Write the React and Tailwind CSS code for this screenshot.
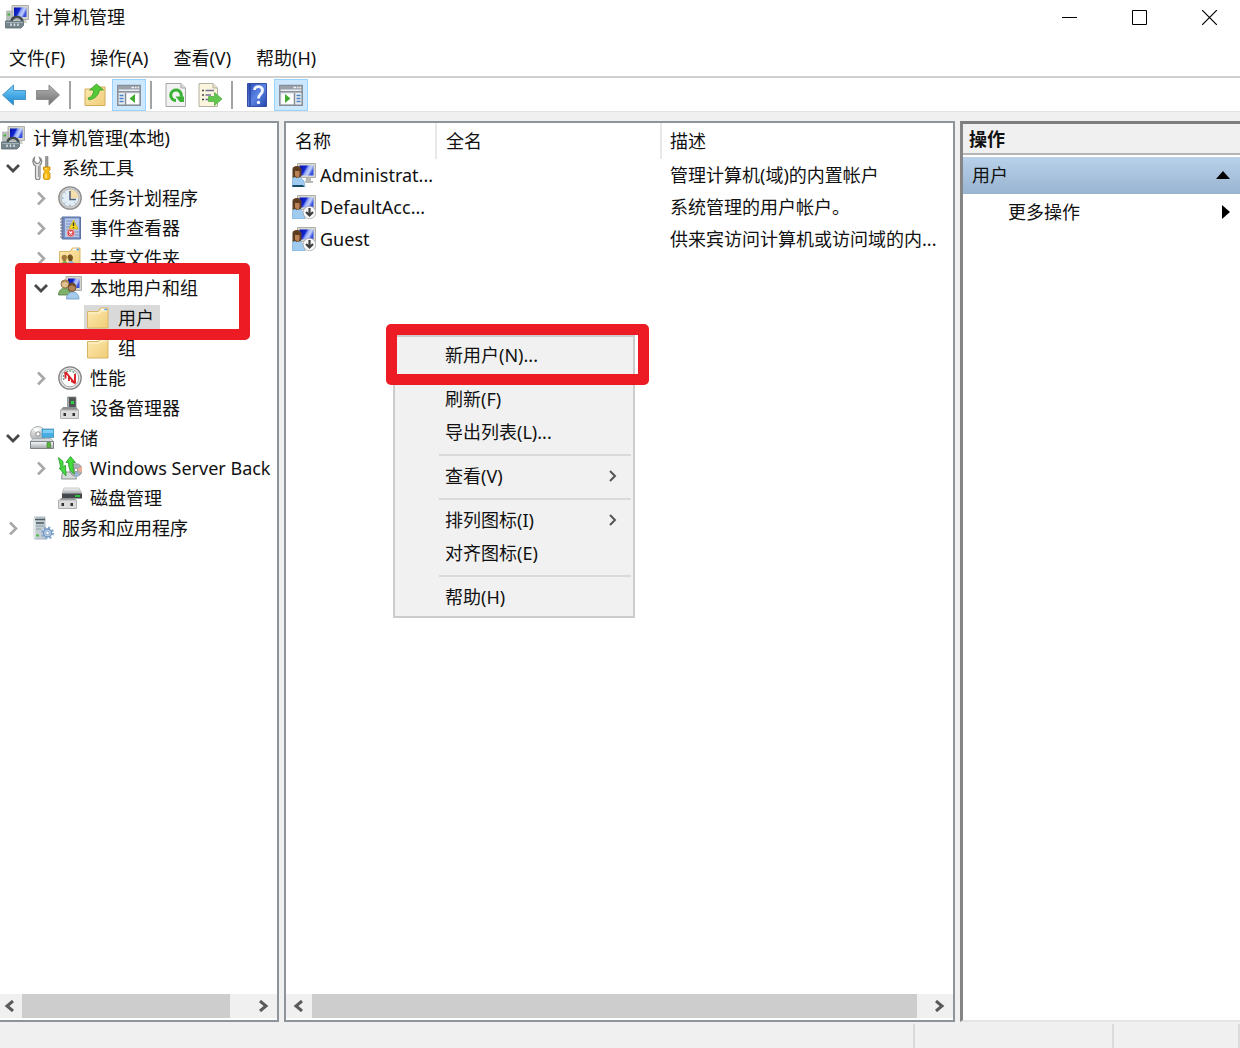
import React from "react";

// Shared gradients for the small icons
function IconDefs() {
  return (
    <svg className="absolute h-0 w-0" aria-hidden="true">
      <defs>
        <linearGradient id="screen" x1="0" y1="0" x2="1" y2="0.4">
          <stop offset="0" stopColor="#0510a8" />
          <stop offset="0.45" stopColor="#1226cf" />
          <stop offset="0.6" stopColor="#8fa6f6" />
          <stop offset="0.8" stopColor="#c4d0fb" />
          <stop offset="1" stopColor="#3550e0" />
        </linearGradient>
        <linearGradient id="folder" x1="0" y1="0" x2="1" y2="1">
          <stop offset="0" stopColor="#fdeab0" />
          <stop offset="1" stopColor="#f0cd78" />
        </linearGradient>
        <linearGradient id="blueArrow" x1="0" y1="0" x2="0" y2="1">
          <stop offset="0" stopColor="#7fd0fa" />
          <stop offset="1" stopColor="#1587d2" />
        </linearGradient>
        <linearGradient id="grayArrow" x1="0" y1="0" x2="0" y2="1">
          <stop offset="0" stopColor="#b5b5b5" />
          <stop offset="1" stopColor="#6e6e6e" />
        </linearGradient>
        <linearGradient id="metal" x1="0" y1="0" x2="0" y2="1">
          <stop offset="0" stopColor="#fafafa" />
          <stop offset="1" stopColor="#a3a8ac" />
        </linearGradient>
        <linearGradient id="help" x1="0" y1="0" x2="1" y2="1">
          <stop offset="0" stopColor="#2c4cb8" />
          <stop offset="0.5" stopColor="#5b84e4" />
          <stop offset="1" stopColor="#2444ab" />
        </linearGradient>
      </defs>
    </svg>
  );
}

function Icon({ children }) {
  return (
    <svg viewBox="0 0 24 24" className="size-6 shrink-0" aria-hidden="true">
      {children}
    </svg>
  );
}

const ComputerIcon = () => (
  <Icon>
    <path d="M7 .5h16.500v14H7z" fill="#d3d3cd" stroke="#b0b0aa" strokeWidth="1" />
    <path d="M9 2.500h12.500v9.500H9z" fill="url(#screen)" />
    <path d="M15 15h6l1 3h-6z" fill="#d0d0cb" />
    <path d="M1.500 6h6v10h-6z" fill="#b9bfbc" stroke="#a5adaa" strokeWidth="0.600" />
    <path d="M2.500 8.500h2.500v2H2.500z" fill="#40b036" />
    <path d="M6.500 17c0-6 9-7 11-1" fill="none" stroke="#41494c" strokeWidth="2.400" />
    <path d="M.5 16h18v4.500L16 23H.5z" fill="#74858b" stroke="#5b6b71" strokeWidth="0.800" />
    <path d="M1 17.500h17" stroke="#a4b3b8" strokeWidth="1" />
    <path d="M6 18.500v2.500M9.500 18.500v2.500M13 18.500v2.500" stroke="#dfe7ea" strokeWidth="1.400" />
  </Icon>
);

const ToolsIcon = () => (
  <Icon>
    <path
      d="M4.500 1.500L4 5l2.500 2.500L9 7l1.500-2.500L9.500 1.500C12.500 3 12.500 7 10 9v12.500a2.200 2.200 0 0 1-4.500 0V10C2.500 8.500 2 3.500 4.500 1.500z"
      fill="#e7e7e7"
      stroke="#868686"
      strokeWidth="1.200"
    />
    <path d="M8.500 10v11" stroke="#9a9a9a" strokeWidth="1" />
    <path d="M15.500 .5h2.500v10.500h-2.500z" fill="#9a9a9a" stroke="#7a7a7a" strokeWidth="0.600" />
    <path d="M13.500 11h6.500v3l-1.500 1.500 1.500 2v4.500c0 2.500-6.500 2.500-6.500 0v-4.500l1.500-2-1.500-1.500z" fill="#f9b915" stroke="#c78f0c" strokeWidth="0.900" />
    <path d="M16 12v1.500M16 18v4" stroke="#ffeb95" strokeWidth="1.300" />
  </Icon>
);

const ClockIcon = () => (
  <Icon>
    <circle cx="12" cy="12" r="11.200" fill="#cdcdcd" stroke="#8d8d8d" strokeWidth="1.300" />
    <circle cx="12" cy="12" r="8.800" fill="#e2edf5" stroke="#b0b0b0" strokeWidth="0.800" />
    <path d="M12 12V3.500A8.500 8.500 0 0 1 20.500 12z" fill="#f4dfab" />
    <path d="M12 5v8.500h6" fill="none" stroke="#566173" strokeWidth="1.500" />
    <path d="M12 20v-1.500M4 12h1.500M6.500 6.500l1 1M6.500 17.500l1-1M17.500 17.500l-1-1" stroke="#8299ab" strokeWidth="1" />
  </Icon>
);

const EventIcon = () => (
  <Icon>
    <path d="M4 1h18.500v22H4z" fill="#7490c4" stroke="#5a71a4" strokeWidth="1" />
    <path d="M7 2.500h14v18.500H7z" fill="#b8c8e6" />
    <path d="M8 5h6M8 8h5M8 11h4M8 14h3M17 16h4M17 19h4" stroke="#7a93c2" strokeWidth="1" />
    <path d="M2 3h4M2 6h4M2 9h4M2 12h4M2 15h4M2 18h4M2 21h4" stroke="#6e7686" strokeWidth="1.200" />
    <path d="M15.500 4l4.500 9h-9z" fill="#fbdc1e" stroke="#c9ab18" strokeWidth="0.800" />
    <path d="M15.500 6.500v3.500M15.500 11v1" stroke="#333" strokeWidth="1.400" />
    <circle cx="12.800" cy="17" r="3.800" fill="#dc4a50" stroke="#f2b6b8" strokeWidth="0.700" />
    <path d="M11.300 15.500l3 3M14.300 15.500l-3 3" stroke="#fff" strokeWidth="1.200" />
  </Icon>
);

const FolderIcon = () => (
  <Icon>
    <path d="M1.500 5.500h10.500l2.500-3.500h7.500v20H1.500z" fill="url(#folder)" stroke="#d9b566" strokeWidth="1" />
    <path d="M15 3.500h6" stroke="#fff" strokeWidth="1.600" />
    <path d="M18.500 3.500h2.500" stroke="#4b96e8" strokeWidth="1.600" />
    <path d="M2.500 7h10.500l2-2h6" fill="none" stroke="#fff6d6" strokeWidth="1.200" />
  </Icon>
);

const SharedFolderIcon = () => (
  <Icon>
    <path d="M1.500 5.500h10.500l2.500-3.500h7.500v20H1.500z" fill="url(#folder)" stroke="#d9b566" strokeWidth="1" />
    <path d="M15 3.500h6" stroke="#fff" strokeWidth="1.600" />
    <path d="M18.500 3.500h2.500" stroke="#4b96e8" strokeWidth="1.600" />
    <path d="M3.500 12c0-4 5-4 5.500-1l-1 4h-3z" fill="#a37a3c" />
    <path d="M9.500 12c0-5 5.500-4 5.500 0l-1 3h-3z" fill="#77531f" />
    <path d="M3 21c0-8 7-8 8 0z" fill="#70a856" />
    <path d="M9 21c0-8 8-8 8 0z" fill="#85b5df" />
  </Icon>
);

const UsersIcon = () => (
  <Icon>
    <path d="M8 .5h15.500v14H8z" fill="#d5d5ce" stroke="#b0b0a9" />
    <path d="M10 2.500h11.500v9.500H10z" fill="url(#screen)" />
    <path d="M.5 19c0-9 12-9 12.500 0z" fill="#7fb06a" stroke="#4d8140" strokeWidth="0.800" />
    <circle cx="7" cy="8" r="4" fill="#dfc192" stroke="#8b6b3d" strokeWidth="0.900" />
    <path d="M3 7.500c0-5 8-5 8 0L7 5.500z" fill="#a98550" />
    <path d="M8.500 23c0-9.500 12.500-9.500 12.500 0z" fill="#a5cbec" stroke="#6794be" strokeWidth="0.800" />
    <circle cx="14" cy="11.500" r="4" fill="#b38358" stroke="#654323" strokeWidth="0.900" />
    <path d="M10 11c0-6 8-6 8 0l-4-2z" fill="#6a4927" />
  </Icon>
);

const PerformanceIcon = () => (
  <Icon>
    <circle cx="12" cy="12" r="11.200" fill="#e4e4e4" stroke="#858585" strokeWidth="1.300" />
    <circle cx="12" cy="12" r="8.800" fill="#fff" stroke="#a8a8a8" strokeWidth="1" />
    <path d="M6 14a6.500 6.500 0 0 1 11.500-6" fill="none" stroke="#6f9f85" strokeWidth="1.500" strokeDasharray="2 1" />
    <path d="M6.500 7l1.500-.5 9 11M7.500 7.500v5M11 10v5M17 8v9.500" fill="none" stroke="#db1f26" strokeWidth="1.900" />
    <path d="M13 12l4 6-4-2z" fill="#db1f26" />
  </Icon>
);

const DeviceIcon = () => (
  <Icon>
    <path d="M9.500 1h8.500v13H9.500z" fill="#4e5456" stroke="#8a8a8a" strokeWidth="0.800" />
    <path d="M9.500 1.500H11v12.500H9.500z" fill="#a4aaab" />
    <path d="M13 5h3v3h-3z" fill="#2ed042" />
    <path d="M5 11h13l2.500 3h-18z" fill="#8c9093" />
    <path d="M2.500 14h18v8.500h-18z" fill="#dcdcdc" stroke="#b0b0b0" />
    <path d="M5.500 17H8v3H5.500zM14.500 17H17v3h-2.500z" fill="#333" />
  </Icon>
);

const StorageIcon = () => (
  <Icon>
    <circle cx="8" cy="8" r="7.500" fill="url(#metal)" stroke="#a8acae" />
    <path d="M8 8L3 2.500h6z" fill="#fff" />
    <circle cx="8" cy="8" r="2.200" fill="#fff" stroke="#888" />
    <path d="M12 3h12v8.500H12z" fill="#48ade2" stroke="#4a95b9" strokeWidth="0.800" />
    <path d="M13 4h10v3H13z" fill="#7fcdf3" />
    <path d="M3 12.500h18l3 3.500H0z" fill="#d5d8da" stroke="#9ca0a3" strokeWidth="0.700" />
    <path d="M.5 15.500h23v7H.5z" fill="url(#metal)" stroke="#7d8386" />
    <path d="M17 16.500h3.500v5H17z" fill="#54ba35" stroke="#3f6e30" strokeWidth="0.600" />
  </Icon>
);

const BackupIcon = () => (
  <Icon>
    <path d="M4.500 16h12l2 7H3.500z" fill="#d6dad9" stroke="#8d9492" />
    <circle cx="18" cy="14" r="6.300" fill="#aeb0b6" stroke="#888" strokeWidth="0.800" />
    <path d="M18 14l6-3.500v5.500z" fill="#f1ad8e" />
    <path d="M18 14l3 6-4 1z" fill="#95b5e5" />
    <circle cx="18" cy="14" r="1.800" fill="#fff" stroke="#888" strokeWidth="0.800" />
    <path d="M.5 1.500l4.500 4v6l2.500-2.500.5 11L1 12l2 .5z" fill="#42dc3c" stroke="#2ca02d" strokeWidth="0.900" />
    <path d="M12.500.5l5 6h-2.500c0 5 .5 8 1.500 11.500-4.500-3-6-6-6-11.500H8z" fill="#42dc3c" stroke="#2ca02d" strokeWidth="0.900" />
  </Icon>
);

const DiskIcon = () => (
  <Icon>
    <path d="M6 2h15l3 5.500H4z" fill="url(#metal)" stroke="#bbb" strokeWidth="0.800" />
    <path d="M4 7.500h20v5H4z" fill="#43494a" />
    <path d="M17 9h5v2h-5z" fill="#31bf42" />
    <path d="M3 12h13l3 3H1z" fill="#8c9093" />
    <path d="M.5 14h18v8.500H.5z" fill="#dcdcdc" stroke="#b0b0b0" />
    <path d="M3.500 17H6v3H3.500zM12.500 17H15v3h-2.500z" fill="#333" />
  </Icon>
);

const ServicesIcon = () => (
  <Icon>
    <path d="M4.500 1h10.500v22H4.500z" fill="#c3ced4" stroke="#9dabb2" strokeWidth="0.800" />
    <path d="M3 3l2.500-2v22L3 21z" fill="#e4eaec" />
    <path d="M5 3.500h10M6 7h8" stroke="#4d5a60" strokeWidth="1.300" />
    <path d="M6 10h8M6 13h5" stroke="#8c9ca4" strokeWidth="1.200" />
    <path d="M6 18.500h3v2H6z" fill="#4fbd46" />
    <circle cx="17.500" cy="17" r="5.300" fill="none" stroke="#86a9cf" strokeWidth="2.500" strokeDasharray="2.080 2.080" />
    <circle cx="17.500" cy="17" r="4" fill="#bdd3ea" stroke="#7398c2" strokeWidth="1.400" />
    <circle cx="17.500" cy="17" r="1.800" fill="#fff" stroke="#7398c2" strokeWidth="0.800" />
  </Icon>
);

function UserIcon({ disabled }) {
  return (
    <Icon>
      <path d="M5.500.5h18v14h-18z" fill="#d8d8d2" stroke="#b0b0aa" />
      <path d="M7.500 2.500h14v10h-14z" fill="url(#screen)" />
      <path d="M14 15h5v3h2v2h-8z" fill="#b9b9b4" />
      <path d="M.5 6c0-4 9-4 9 1v6l-2 2H.5z" fill="#5d3c22" />
      <path d="M3 8h4.500v4.500L6 15l-3-2.500z" fill="#b98355" />
      <path d="M.5 24v-8.500L3 14l2.500 2L8 14l4 4 1 6z" fill="#9fcbf0" stroke="#78aad6" strokeWidth="0.700" />
      {!disabled && <path d="M.5 22h10.500l1.500 2H.5z" fill="#174a67" />}
      {disabled && (
        <>
          <circle cx="17.500" cy="17.500" r="6.300" fill="#fafafa" stroke="#9b9b9b" strokeWidth="0.700" />
          <path d="M17.500 13v7.500M14 17l3.500 3.500 3.500-3.500" fill="none" stroke="#3f3f3f" strokeWidth="2.200" />
        </>
      )}
    </Icon>
  );
}

const BackIcon = () => (
  <Icon>
    <path d="M.5 12L11.500 2v5.500h12v9h-12V22z" fill="url(#blueArrow)" stroke="#4a93c2" strokeWidth="1" />
  </Icon>
);

const ForwardIcon = () => (
  <Icon>
    <path d="M23.500 12L13 2v5.500H.5v9H13V22z" fill="url(#grayArrow)" stroke="#8d8d8d" strokeWidth="1" />
  </Icon>
);

const UpFolderIcon = () => (
  <Icon>
    <path d="M2 6h10l3-2h7v18.500H2z" fill="url(#folder)" stroke="#d2ac58" />
    <path d="M5 15c4-1 5.500-4 5.500-8H6.500l7-6 7 6h-4c-1 6-5.500 9-10.500 10z" fill="#54c936" stroke="#3c9a2e" strokeWidth="0.800" />
  </Icon>
);

function PaneIcon({ flip }) {
  return (
    <Icon>
      <path d="M.8 2.500h22.400v19.700H.8z" fill="#e9edf2" stroke="#868d96" strokeWidth="1.500" />
      <path d="M1 3h22v3.500H1z" fill="#98a1ac" />
      <path d="M14.500 4.500H17M18 4.500h1.500M20.500 4.500H22" stroke="#f2f4f6" strokeWidth="1.400" />
      <path d="M1 8.800h22" stroke="#868d96" strokeWidth="1.500" />
      {flip ? (
        <>
          <path d="M2.500 11h12v10h-12z" fill="#fff" />
          <path d="M15.500 10v12" stroke="#868d96" strokeWidth="1.400" />
          <path d="M17.500 12.500h4M17.500 15.500h4M17.500 18.500h4" stroke="#4c84c5" strokeWidth="1.600" />
          <path d="M6 11l5.500 4.500L6 20z" fill="#43aa34" />
        </>
      ) : (
        <>
          <path d="M9.500 11h12v10h-12z" fill="#fff" />
          <path d="M8.500 10v12" stroke="#868d96" strokeWidth="1.400" />
          <path d="M2.500 12.500h4M2.500 15.500h4M2.500 18.500h4" stroke="#4c84c5" strokeWidth="1.600" />
          <path d="M18 11l-5.500 4.500L18 20z" fill="#43aa34" />
        </>
      )}
    </Icon>
  );
}

const RefreshIcon = () => (
  <Icon>
    <path d="M2 .5h15l4.500 4.500v18.500H2z" fill="#f2f2f2" stroke="#a7a7a7" />
    <path d="M17 .5v4.500h4.500" fill="#ddd" stroke="#a7a7a7" />
    <path d="M12 17.500a5.300 5.300 0 1 1 5-3.500" fill="none" stroke="#3bb235" strokeWidth="3" />
    <path d="M11.500 13.500h8.500v5.500h-4z" fill="#3bb235" />
  </Icon>
);

const ExportIcon = () => (
  <Icon>
    <path d="M1 .5h14l4.500 4.500v18.500H1z" fill="#fbf5de" stroke="#b3b0a2" />
    <path d="M15 .5v4.500h4.500" fill="#e8e2c9" stroke="#b3b0a2" />
    <path d="M4 7.500h2M4 12h2M4 16.500h2" stroke="#444" strokeWidth="1.700" />
    <path d="M7.500 7.500H16M7.500 12H13M7.500 16.500H13" stroke="#717196" strokeWidth="1.400" />
    <path d="M10.500 13.500h6v-4l7.500 6.500-7.500 6.500v-4h-6z" fill="#62c74d" stroke="#57ad49" strokeWidth="0.800" />
  </Icon>
);

const HelpIcon = () => (
  <Icon>
    <path d="M2.500.5h19v23h-19z" fill="url(#help)" stroke="#3550a3" />
    <path d="M5 1v22" stroke="#2b459c" strokeWidth="1.500" />
    <path d="M9.500 7c0-4.500 8-4.500 8 .5 0 3.500-4 3.500-4 8" fill="none" stroke="#f4f7ff" strokeWidth="2.800" />
    <circle cx="13.500" cy="19.500" r="1.700" fill="#f4f7ff" />
  </Icon>
);

function Chevron({ open }) {
  return (
    <svg viewBox="0 0 14 14" className="size-3.5" aria-hidden="true">
      {open ? (
        <path d="M1 4l6 6 6-6" fill="none" stroke="#484848" strokeWidth="2.800" />
      ) : (
        <path d="M4 1.500L10 7.500l-6 6" fill="none" stroke="#a8a8a8" strokeWidth="2.600" />
      )}
    </svg>
  );
}

const indent = ["pl-0", "pl-7", "pl-14"];

const tree = [
  { label: "系统工具", depth: 0, icon: ToolsIcon, open: true },
  { label: "任务计划程序", depth: 1, icon: ClockIcon, open: false },
  { label: "事件查看器", depth: 1, icon: EventIcon, open: false },
  { label: "共享文件夹", depth: 1, icon: SharedFolderIcon, open: false },
  { label: "本地用户和组", depth: 1, icon: UsersIcon, open: true },
  { label: "用户", depth: 2, icon: FolderIcon, selected: true },
  { label: "组", depth: 2, icon: FolderIcon },
  { label: "性能", depth: 1, icon: PerformanceIcon, open: false },
  { label: "设备管理器", depth: 1, icon: DeviceIcon },
  { label: "存储", depth: 0, icon: StorageIcon, open: true },
  { label: "Windows Server Back", depth: 1, icon: BackupIcon, open: false },
  { label: "磁盘管理", depth: 1, icon: DiskIcon },
  { label: "服务和应用程序", depth: 0, icon: ServicesIcon, open: false },
];

const users = [
  { name: "Administrat...", desc: "管理计算机(域)的内置帐户" },
  { name: "DefaultAcc...", desc: "系统管理的用户帐户。", disabled: true },
  { name: "Guest", desc: "供来宾访问计算机或访问域的内...", disabled: true },
];

const menuGroups = [
  [{ label: "新用户(N)..." }],
  [{ label: "刷新(F)" }, { label: "导出列表(L)..." }],
  [{ label: "查看(V)", sub: true }],
  [{ label: "排列图标(I)", sub: true }, { label: "对齐图标(E)" }],
  [{ label: "帮助(H)" }],
];

function TreeRow({ item }) {
  const ItemIcon = item.icon;
  const hasChildren = item.open !== undefined;
  return (
    <li className={`flex h-[30px] items-center ${indent[item.depth]}`}>
      <span className="flex w-[26px] shrink-0 justify-center">
        {hasChildren && (
          <button aria-label={item.label} aria-expanded={item.open} className="block">
            <Chevron open={item.open} />
          </button>
        )}
      </span>
      <span className={`ml-0.5 flex h-[27px] items-center gap-2 pl-0.5 pr-1.5 whitespace-nowrap ${item.selected ? "bg-[#d9d9d9]" : ""}`}>
        <ItemIcon />
        {item.label}
      </span>
    </li>
  );
}

function ToolButton({ label, active, children }) {
  return (
    <button
      aria-label={label}
      className={`flex h-8 w-[34px] items-center justify-center ${active ? "border border-[#99d1ff] bg-[#cce8ff]" : ""}`}
    >
      {children}
    </button>
  );
}

const ToolDivider = () => <span className="mr-[7px] ml-1 h-7 w-0.5 bg-[#a3a3a3]" />;

function ScrollBar({ wideEnd }) {
  return (
    <div className="mt-auto mb-0.5 flex h-6 items-center bg-[#f0f0f0]">
      <button aria-label="向左滚动" className={`flex h-full items-center ${wideEnd ? "w-[22px] pl-[3px]" : "w-[26px] pl-1.5"}`}>
        <svg viewBox="0 0 12 12" className="size-3">
          <path d="M10 1L4 6l6 5" fill="none" stroke="#5a5a5a" strokeWidth="3" />
        </svg>
      </button>
      <span className="h-full flex-1 bg-[#cdcdcd]" />
      <button aria-label="向右滚动" className={`flex h-full items-center justify-end pr-[7px] ${wideEnd ? "w-[47px]" : "w-9"}`}>
        <svg viewBox="0 0 12 12" className="size-3">
          <path d="M2 1l6 5-6 5" fill="none" stroke="#5a5a5a" strokeWidth="3" />
        </svg>
      </button>
    </div>
  );
}

function ContextMenu() {
  return (
    <div className="absolute top-[212px] left-[107px] w-[242px] border-2 border-[#cccccc] bg-[#f1f1f1] py-0.5">
      {menuGroups.map((group, i) => (
        <div key={i}>
          {i > 0 && (
            <div className="flex h-[11px] items-center pr-0.5 pl-11">
              <hr className="w-full border-t-2 border-[#dadada]" />
            </div>
          )}
          {group.map((item) => (
            <button key={item.label} className="flex h-[33px] w-full items-center justify-between pr-3.5 pb-px pl-[50px]">
              {item.label}
              {item.sub && (
                <svg viewBox="0 0 12 12" className="size-3" aria-hidden="true">
                  <path d="M3 1l5 5-5 5" fill="none" stroke="#555" strokeWidth="2" />
                </svg>
              )}
            </button>
          ))}
        </div>
      ))}
      {/* red frame round the "new user" entry */}
      <div className="pointer-events-none absolute -top-[13px] -left-[9px] h-[61px] w-[263px] rounded-[5px] border-[11px] border-[#ed1c24]" />
    </div>
  );
}

export default function App() {
  return (
    <div className="flex min-h-screen flex-col bg-[#f0f0f0] font-['Noto_Sans','Noto_Sans_CJK_SC',sans-serif] text-lg leading-6 text-[#111]">
      <IconDefs />

      {/* title bar */}
      <header className="flex h-[38px] items-start justify-between bg-white">
        <div className="flex h-[34px] items-center gap-1.5 pl-[5px]">
          <ComputerIcon />
          <h1>计算机管理</h1>
        </div>
        <div className="flex h-[35px] gap-4 pr-1">
          <button aria-label="最小化" className="flex w-[54px] items-center justify-center">
            <svg viewBox="0 0 15 15" className="size-[15px]">
              <path d="M0 7.500h15" stroke="#000" />
            </svg>
          </button>
          <button aria-label="最大化" className="flex w-[54px] items-center justify-center">
            <svg viewBox="0 0 15 15" className="size-[15px]">
              <path d="M.5.5h14v14H.5z" fill="none" stroke="#000" />
            </svg>
          </button>
          <button aria-label="关闭" className="flex w-[54px] items-center justify-center">
            <svg viewBox="0 0 15 15" className="size-[15px]">
              <path d="M0 0l15 15M15 0L0 15" stroke="#000" strokeWidth="1.200" />
            </svg>
          </button>
        </div>
      </header>

      <nav className="flex h-10 items-center gap-[25px] border-b-2 border-[#d0d0d0] bg-white pt-0.5 pl-[9px]">
        <button>文件(F)</button>
        <button>操作(A)</button>
        <button>查看(V)</button>
        <button>帮助(H)</button>
      </nav>

      <div className="flex h-[33px] items-center bg-white pt-px">
        <button aria-label="后退" className="mr-[3px] flex w-7 justify-center">
          <BackIcon />
        </button>
        <ToolButton label="前进"><ForwardIcon /></ToolButton>
        <ToolDivider />
        <ToolButton label="上一级"><UpFolderIcon /></ToolButton>
        <ToolButton label="显示/隐藏控制台树" active><PaneIcon /></ToolButton>
        <ToolDivider />
        <ToolButton label="刷新"><RefreshIcon /></ToolButton>
        <ToolButton label="导出列表"><ExportIcon /></ToolButton>
        <ToolDivider />
        <ToolButton label="帮助"><HelpIcon /></ToolButton>
        <ToolButton label="显示/隐藏操作窗格" active><PaneIcon flip /></ToolButton>
      </div>

      <main className="grid flex-1 grid-cols-[279px_minmax(0,1fr)_280px] gap-[5px] border-t border-[#e2e2e2] pt-[9px]">
        {/* console tree */}
        <aside className="relative flex flex-col overflow-hidden border-y-2 border-r-2 border-[#8e949c] bg-white">
          <div className="flex h-[30px] items-center gap-2 pl-px">
            <ComputerIcon />
            计算机管理(本地)
          </div>
          <ul>
            {tree.map((item) => (
              <TreeRow key={item.label} item={item} />
            ))}
          </ul>
          <ScrollBar wideEnd />
          <div className="pointer-events-none absolute top-[140px] left-[15px] h-[77px] w-[235px] rounded-[5px] border-[11px] border-[#ed1c24]" />
        </aside>

        {/* user list */}
        <section className="relative flex flex-col border-2 border-[#8e949c] bg-white">
          <table className="w-full table-fixed text-left">
            <thead>
              <tr className="h-9">
                <th className="w-[150px] border-r-2 border-[#e8e8e8] pl-[9px] font-normal">名称</th>
                <th className="w-[225px] border-r-2 border-[#e8e8e8] pl-[9px] font-normal">全名</th>
                <th className="pl-2 font-normal">描述</th>
              </tr>
            </thead>
            <tbody>
              {users.map((user) => (
                <tr key={user.name} className="h-8">
                  <td className="pl-1.5">
                    <div className="flex items-center gap-1">
                      <UserIcon disabled={user.disabled} />
                      {user.name}
                    </div>
                  </td>
                  <td></td>
                  <td className="truncate pl-[9px]">{user.desc}</td>
                </tr>
              ))}
            </tbody>
          </table>
          <ContextMenu />
          <ScrollBar />
        </section>

        {/* actions pane */}
        <aside className="border-t-[3px] border-l-[3px] border-b-2 border-t-[#7d7d7d] border-b-[#e4e4e4] border-l-[#858585] bg-white">
          <h2 className="flex h-[31px] items-center border-b-2 border-[#b5b5b5] bg-[#f0f0f0] pl-1.5 font-bold">操作</h2>
          <button className="mt-0.5 flex h-[37px] w-full items-center justify-between bg-linear-to-b from-[#b9d1ea] to-[#99b4d1] pr-2.5 pb-px pl-[9px]">
            用户
            <svg viewBox="0 0 14 8" className="h-2 w-3.5" aria-hidden="true">
              <path d="M7 0l7 8H0z" fill="#000" />
            </svg>
          </button>
          <button className="flex h-9 w-full items-center justify-between pr-2.5 pb-px pl-[45px]">
            更多操作
            <svg viewBox="0 0 8 14" className="h-3.5 w-2" aria-hidden="true">
              <path d="M0 0l8 7-8 7z" fill="#000" />
            </svg>
          </button>
        </aside>
      </main>

      <footer className="flex h-[26px] justify-end pt-0.5">
        <div className="w-[199px] border-l-2 border-[#dadada]" />
        <div className="w-32 border-x-2 border-[#dadada]" />
      </footer>
    </div>
  );
}
